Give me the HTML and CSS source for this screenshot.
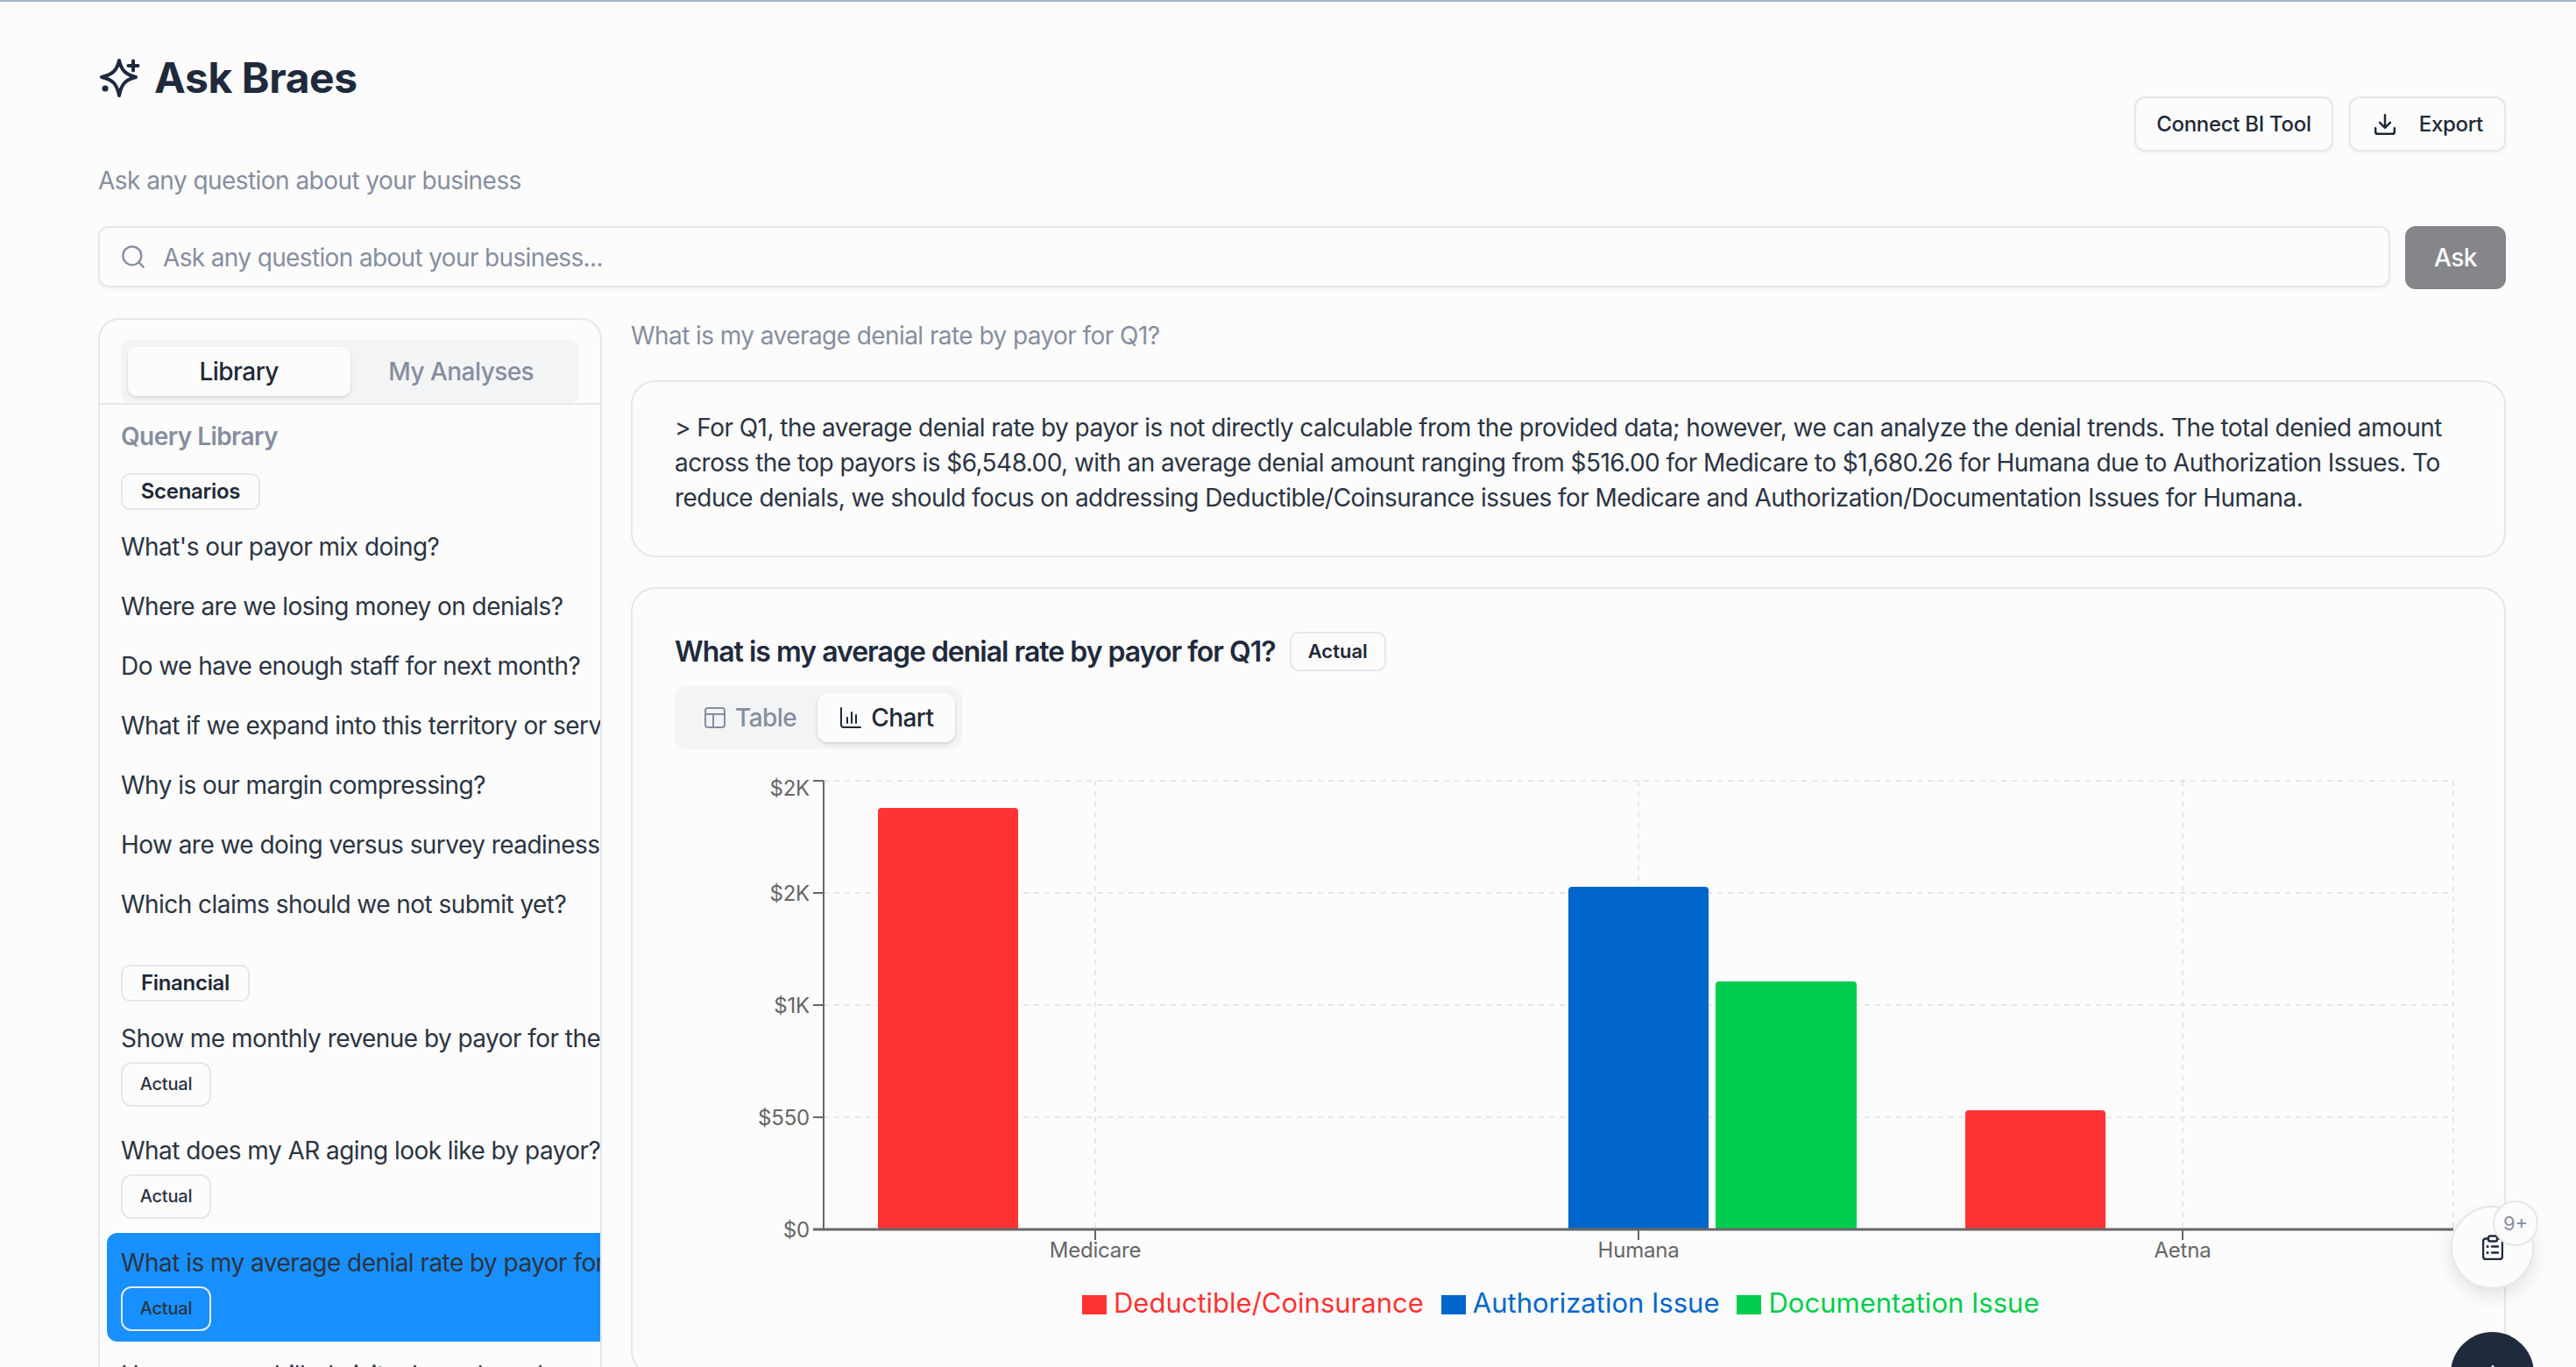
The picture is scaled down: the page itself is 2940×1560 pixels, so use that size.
FILE: index.html
```html
<!DOCTYPE html>
<html lang="en">
<head>
    <meta charset="UTF-8">
    <title>Ask Braes</title>
    <link rel="stylesheet" href="styles.css">
</head>
<body>
    <div class="page">
        <header class="header">
            <div>
                <h1 class="title">
                    <svg class="title-icon" viewBox="0 0 48 48" fill="none" stroke="currentColor" stroke-width="4" stroke-linejoin="round" stroke-linecap="round">
                        <path d="M24 5C26.500 16 31 21 43 24C31 27 26.500 32 24 45C21.500 32 17 27 4 24C17 21 21.500 16 24 5Z"/>
                        <path d="M40 5.500V16.500M34.500 11H45.500"/>
                        <path d="M8 37h.1" stroke-width="7"/>
                    </svg>
                    Ask Braes
                </h1>
                <p class="subtitle">Ask any question about your business</p>
            </div>
            <div class="header-actions">
                <button class="btn btn-connect">Connect BI Tool</button>
                <button class="btn btn-export">
                    <svg class="icon-26" viewBox="0 0 24 24" fill="none" stroke="currentColor" stroke-width="2.300" stroke-linecap="round" stroke-linejoin="round">
                        <path d="M12 2v13M6.500 10l5.500 5.500 5.500-5.500"/>
                        <path d="M2 16v3.500A2.500 2.500 0 0 0 4.500 22h15a2.500 2.500 0 0 0 2.500-2.500V16"/>
                    </svg>
                    Export
                </button>
            </div>
        </header>

        <div class="search-row">
            <div class="search-box">
                <svg class="icon-28" viewBox="0 0 24 24" fill="none" stroke="currentColor" stroke-width="2" stroke-linecap="round">
                    <circle cx="11" cy="11" r="9"/>
                    <path d="M18 18l4 4"/>
                </svg>
                <span>Ask any question about your business...</span>
            </div>
            <button class="ask-btn">Ask</button>
        </div>

        <div class="content">
            <aside class="sidebar">
                <div class="tabs-wrap">
                    <div class="tabs">
                        <div class="tab tab-active">Library</div>
                        <div class="tab">My Analyses</div>
                    </div>
                </div>
                <div class="library">
                    <div class="library-title">Query Library</div>

                    <span class="cat-badge">Scenarios</span>
                    <ul class="query-list">
                        <li class="query">What's our payor mix doing?</li>
                        <li class="query">Where are we losing money on denials?</li>
                        <li class="query">Do we have enough staff for next month?</li>
                        <li class="query">What if we expand into this territory or service line?</li>
                        <li class="query">Why is our margin compressing?</li>
                        <li class="query">How are we doing versus survey readiness?</li>
                        <li class="query">Which claims should we not submit yet?</li>
                    </ul>

                    <span class="cat-badge cat-financial">Financial</span>
                    <ul class="query-list">
                        <li class="query">Show me monthly revenue by payor for the last year<span class="tag">Actual</span></li>
                        <li class="query">What does my AR aging look like by payor?<span class="tag">Actual</span></li>
                        <li class="query query-selected">What is my average denial rate by payor for Q1?<span class="tag">Actual</span></li>
                        <li class="query">How many unbilled visits do we have by episode?<span class="tag">Actual</span></li>
                    </ul>
                </div>
            </aside>

            <main class="main">
                <p class="question">What is my average denial rate by payor for Q1?</p>

                <section class="card answer">
                    &gt; For Q1, the average denial rate by payor is not directly calculable from the provided data; however, we can analyze the denial trends. The total denied amount across the top payors is $6,548.00, with an average denial amount ranging from $516.00 for Medicare to $1,680.26 for Humana due to Authorization Issues. To reduce denials, we should focus on addressing Deductible/Coinsurance issues for Medicare and Authorization/Documentation Issues for Humana.
                </section>

                <section class="card chart-card">
                    <div class="chart-head">
                        <h2 class="chart-title">What is my average denial rate by payor for Q1?</h2>
                        <span class="chart-tag">Actual</span>
                    </div>
                    <div class="view-toggle">
                        <div class="view-btn view-table">
                            <svg class="icon-24" viewBox="0 0 24 24" fill="none" stroke="currentColor" stroke-width="2" stroke-linejoin="round">
                                <rect x="1" y="1" width="22" height="22" rx="3"/>
                                <path d="M1 8h22M10 8v15"/>
                            </svg>
                            Table
                        </div>
                        <div class="view-btn view-active">
                            <svg class="icon-24" viewBox="0 0 24 24" fill="none" stroke="currentColor" stroke-width="2" stroke-linecap="round" stroke-linejoin="round">
                                <path d="M1 1v19a3 3 0 0 0 3 3h19"/>
                                <path d="M8 12v6M13 6v12M18 9v9"/>
                            </svg>
                            Chart
                        </div>
                    </div>

                    <svg class="chart" viewBox="770 870 2040 570" width="2040" height="570">
                        <g class="grid">
                            <path d="M940 890H2800M940 1018H2800M940 1146H2800M940 1274H2800"/>
                            <path d="M1250 890V1402M1870 890V1402M2491 890V1402M2800 890V1402"/>
                        </g>
                        <path class="bar-red" d="M1002 1402V925a4 4 0 0 1 4-4H1158a4 4 0 0 1 4 4V1402Z"/>
                        <path class="bar-blue" d="M1790 1402V1015a4 4 0 0 1 4-4H1946a4 4 0 0 1 4 4V1402Z"/>
                        <path class="bar-green" d="M1958 1402V1123a4 4 0 0 1 4-4H2115a4 4 0 0 1 4 4V1402Z"/>
                        <path class="bar-red" d="M2243 1402V1270a4 4 0 0 1 4-4H2399a4 4 0 0 1 4 4V1402Z"/>
                        <g class="axis">
                            <path d="M940 890V1402"/>
                            <path class="axis-base" d="M928 1402H2800"/>
                            <path d="M928 890H940M928 1018H940M928 1146H940M928 1274H940"/>
                            <path d="M1250 1402V1414M1870 1402V1414M2491 1402V1414"/>
                        </g>
                        <g class="tick-y">
                            <text x="924" y="907">$2K</text>
                            <text x="924" y="1027">$2K</text>
                            <text x="924" y="1155">$1K</text>
                            <text x="924" y="1283">$550</text>
                            <text x="924" y="1411">$0</text>
                        </g>
                        <g class="tick-x">
                            <text x="1250" y="1434">Medicare</text>
                            <text x="1870" y="1434">Humana</text>
                            <text x="2491" y="1434">Aetna</text>
                        </g>
                    </svg>

                    <div class="legend">
                        <span class="legend-item legend-red"><i class="swatch"></i>Deductible/Coinsurance</span>
                        <span class="legend-item legend-blue"><i class="swatch"></i>Authorization Issue</span>
                        <span class="legend-item legend-green"><i class="swatch"></i>Documentation Issue</span>
                    </div>
                </section>
            </main>
        </div>
    </div>

    <button class="fab fab-tasks">
        <svg class="icon-tasks" viewBox="0 0 24 29" fill="none" stroke="currentColor" stroke-width="2.400" stroke-linecap="round" stroke-linejoin="round">
            <path d="M7 4.500H4a3 3 0 0 0-3 3V25a3 3 0 0 0 3 3h16a3 3 0 0 0 3-3V7.500a3 3 0 0 0-3-3h-3"/>
            <rect x="7" y="1.500" width="10" height="6" rx="2"/>
            <path d="M11 13.500h7M11 20.500h7"/>
            <path d="M6 13.500h.1M6 20.500h.1" stroke-width="3"/>
        </svg>
        <span class="fab-badge">9+</span>
    </button>
    <button class="fab fab-add">
        <svg class="icon-plus" viewBox="0 0 20 20" fill="none" stroke="currentColor" stroke-width="3" stroke-linecap="round">
            <path d="M10 1.500v17M1.500 10h17"/>
        </svg>
    </button>
</body>
</html>
```

FILE: styles.css
```css
* {
    box-sizing: border-box;
}
html, body {
    margin: 0;
    height: 1560px;
    overflow: hidden;
}
body {
    position: relative;
    font-family: Inter, "Liberation Sans", sans-serif;
    font-size: 28px;
    letter-spacing: -0.55px;
    color: #1f2937;
    background-color: #fcfcfd;
    border-top: 2px solid #a3b1cb;
}
ul {
    list-style: none;
    margin: 0;
    padding: 0;
}
button {
    font-family: inherit;
    letter-spacing: inherit;
}
.page {
    padding: 58px 80px 0 112px;
}
.icon-24 {
    width: 24px;
    height: 24px;
    flex-shrink: 0;
}
.icon-26 {
    width: 26px;
    height: 26px;
    flex-shrink: 0;
}
.icon-28 {
    width: 28px;
    height: 28px;
    flex-shrink: 0;
}

/* header */
.header {
    display: flex;
    justify-content: space-between;
    align-items: flex-start;
}
.title {
    display: flex;
    align-items: center;
    gap: 16px;
    margin: 0;
    height: 56px;
    font-size: 48px;
    font-weight: 700;
    letter-spacing: -0.400px;
    color: #1f2a3c;
}
.title-icon {
    width: 48px;
    height: 48px;
}
.subtitle {
    margin: 70px 0 0;
    line-height: 40px;
    color: #868e9e;
}
.header-actions {
    display: flex;
    gap: 18px;
    margin-top: 50px;
}
.btn {
    display: flex;
    align-items: center;
    gap: 26px;
    height: 63px;
    font-size: 24px;
    font-weight: 500;
    letter-spacing: -0.300px;
    color: #1f2937;
    background-color: #fcfcfd;
    border: 2px solid #e5e7eb;
    border-radius: 12px;
    box-shadow: 0 2px 4px rgba(0,0,0,0.05);
}
.btn-connect {
    padding: 0 23px;
}
.btn-export {
    padding: 0 24px 0 26px;
}

/* search */
.search-row {
    display: flex;
    gap: 17px;
    margin-top: 32px;
}
.search-box {
    flex: 1;
    display: flex;
    align-items: center;
    gap: 20px;
    height: 70px;
    padding: 0 24px;
    color: #868e9e;
    border: 2px solid #e5e7eb;
    border-radius: 12px;
    box-shadow: 0 2px 4px rgba(0,0,0,0.05);
}
.search-box span {
    padding-top: 2px;
    letter-spacing: -0.640px;
}
.ask-btn {
    width: 115px;
    height: 72px;
    font-size: 28px;
    font-weight: 500;
    color: #fcfcfd;
    background-color: #85868a;
    border: none;
    border-radius: 12px;
}

/* layout */
.content {
    display: grid;
    grid-template-columns: 575px 1fr;
    gap: 33px;
    margin-top: 33px;
}

/* sidebar */
.sidebar {
    height: 1400px;
    border: 2px solid #e5e7eb;
    border-radius: 24px;
    overflow: hidden;
}
.tabs-wrap {
    padding: 23px 24px 0;
    border-bottom: 2px solid #e5e7eb;
}
.tabs {
    display: grid;
    grid-template-columns: 1fr 1fr;
    height: 72px;
    padding: 8px;
    background-color: #f3f4f6;
    border-radius: 12px;
}
.tab {
    display: flex;
    align-items: center;
    justify-content: center;
    font-weight: 500;
    color: #868e9e;
    border-radius: 10px;
}
.tab-active {
    color: #1f2937;
    background-color: #fcfcfd;
    box-shadow: 0 2px 4px rgba(0,0,0,0.12);
}
.library {
    padding: 16px 0 0 8px;
}
.library-title {
    margin-left: 16px;
    line-height: 40px;
    font-weight: 600;
    color: #868e9e;
}
.cat-badge {
    display: block;
    width: 159px;
    height: 42px;
    margin: 22px 0 8px 16px;
    line-height: 38px;
    text-align: center;
    font-size: 24px;
    font-weight: 600;
    letter-spacing: -0.300px;
    border: 2px solid #e5e7eb;
    border-radius: 10px;
}
.cat-financial {
    width: 147px;
    margin-top: 39px;
}
.query-list {
    display: flex;
    flex-direction: column;
    gap: 4px;
}
.query {
    padding: 14px 16px 10px;
    line-height: 40px;
    white-space: nowrap;
    overflow: hidden;
    color: #2b3442;
    border-radius: 12px 0 0 12px;
}
.query-selected {
    background-color: #1890ff;
}
.tag {
    display: block;
    width: 103px;
    height: 51px;
    margin: 7px 0 2px;
    line-height: 47px;
    text-align: center;
    font-size: 20px;
    font-weight: 500;
    letter-spacing: -0.200px;
    border: 2px solid #e5e7eb;
    border-radius: 12px;
}
.query-selected .tag {
    border-color: #e8eaf0;
}

/* main column */
.question {
    margin: 0 0 31px;
    line-height: 40px;
    letter-spacing: -0.570px;
    color: #868e9e;
}
.card {
    border: 2px solid #e5e7eb;
    border-radius: 28px;
}
.answer {
    padding: 32px 48px 46px;
    line-height: 40px;
    color: #2b3442;
}
.chart-card {
    margin-top: 34px;
    padding: 49px 48px 0;
    height: 900px;
}
.chart-head {
    display: flex;
    align-items: center;
    gap: 16px;
}
.chart-title {
    margin: 0;
    font-size: 32px;
    font-weight: 600;
    letter-spacing: -1px;
    color: #1f2a3c;
}
.chart-tag {
    width: 110px;
    height: 45px;
    line-height: 41px;
    text-align: center;
    font-size: 22px;
    font-weight: 600;
    letter-spacing: 0;
    border: 2px solid #e5e7eb;
    border-radius: 10px;
}
.view-toggle {
    display: inline-flex;
    margin-top: 17px;
    padding: 8px;
    height: 72px;
    background-color: #f3f4f6;
    border-radius: 14px;
}
.view-btn {
    display: flex;
    align-items: center;
    gap: 11px;
    padding: 0 24px 0 26px;
    font-weight: 500;
    color: #868e9e;
    border-radius: 12px;
}
.view-active {
    color: #1f2937;
    background-color: #fcfcfd;
    box-shadow: 0 2px 4px rgba(0,0,0,0.14);
}

/* chart */
.chart {
    display: block;
    margin-top: 16px;
}
.grid path {
    fill: none;
    stroke: #e5e7eb;
    stroke-width: 2;
    stroke-dasharray: 6 6;
}
.axis path {
    fill: none;
    stroke: #666;
    stroke-width: 2;
}
.axis .axis-base {
    stroke-width: 3;
}
.bar-red {
    fill: #ff3333;
}
.bar-blue {
    fill: #0066cc;
}
.bar-green {
    fill: #00cc4d;
}
.tick-y text, .tick-x text {
    font-size: 24px;
    letter-spacing: -0.200px;
    fill: #666;
}
.tick-y text {
    text-anchor: end;
}
.tick-x text {
    text-anchor: middle;
}
.legend {
    display: flex;
    margin-top: 24px;
    padding-left: 465px;
    gap: 20px;
    font-size: 31px;
    letter-spacing: 0;
    line-height: 44px;
}
.legend-item {
    display: flex;
    align-items: center;
    gap: 8px;
}
.swatch {
    width: 28px;
    height: 22px;
    margin-top: 4px;
    background-color: currentColor;
}
.legend-red {
    color: #ff3333;
}
.legend-blue {
    color: #0066cc;
}
.legend-green {
    color: #00cc4d;
}

/* floating buttons */
.fab {
    position: absolute;
    left: 2797px;
    display: flex;
    align-items: center;
    justify-content: center;
    width: 95px;
    height: 95px;
    padding: 0;
    border-radius: 50%;
}
.fab-tasks {
    top: 1374px;
    color: #1f2a3c;
    background-color: #fcfcfd;
    border: 2px solid #e5e7eb;
    box-shadow: 0 8px 20px rgba(0,0,0,0.1);
}
.icon-tasks {
    width: 24px;
    height: 29px;
}
.icon-plus {
    width: 20px;
    height: 20px;
}
.fab-badge {
    position: absolute;
    top: -8px;
    right: -7px;
    width: 52px;
    height: 52px;
    line-height: 48px;
    text-align: center;
    font-size: 22px;
    letter-spacing: 0;
    color: #868e9e;
    background-color: #fcfcfd;
    border: 2px solid #e5e7eb;
    border-radius: 50%;
}
.fab-add {
    top: 1518px;
    color: #fcfcfd;
    background-color: #1f2a3c;
    border: none;
}
```
